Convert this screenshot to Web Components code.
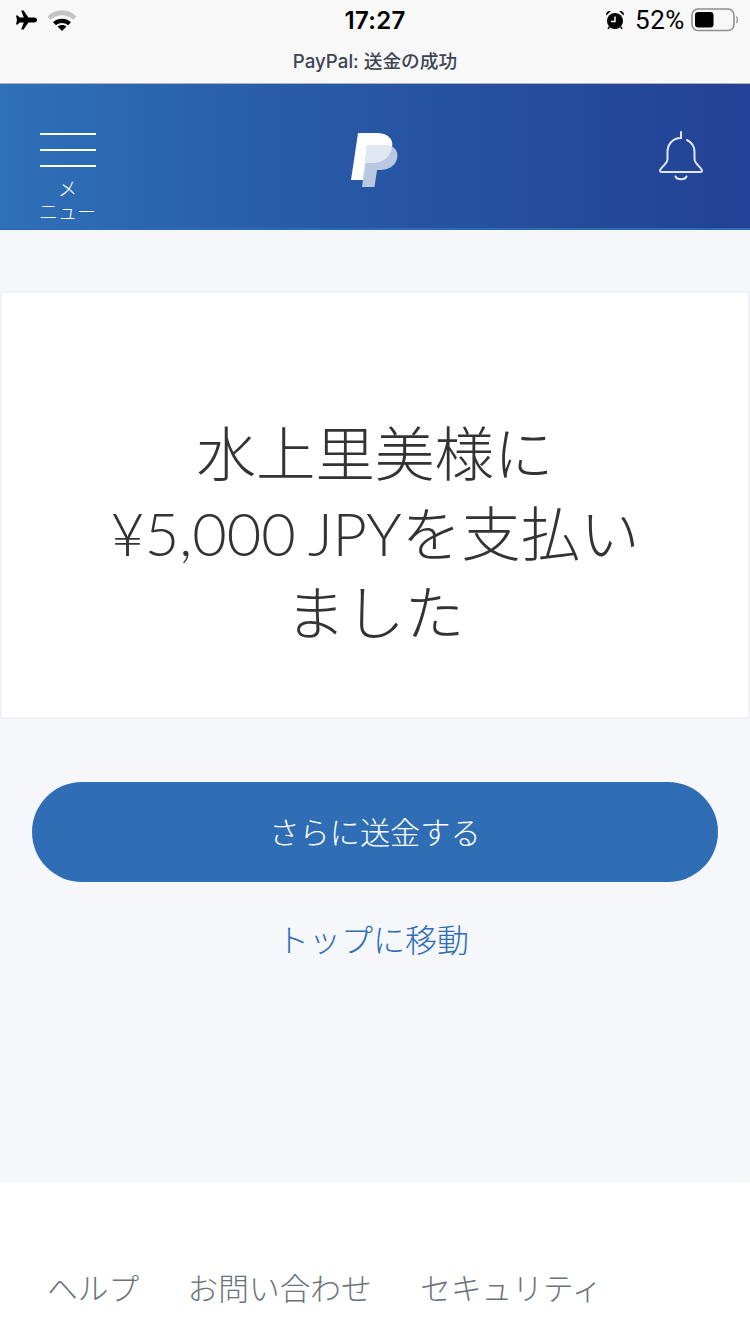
<!DOCTYPE html>
<html lang="ja">
<head>
<meta charset="utf-8">
<title>PayPal: 送金の成功</title>
<style>
    html, body {
        margin: 0;
        padding: 0;
        background: #f5f7fa;
        font-family: "Noto Sans CJK JP", sans-serif;
    }
</style>
</head>
<body>
<status-bar time="17:27" battery="52%" title="PayPal: 送金の成功"></status-bar>
<pp-header></pp-header>
<pp-main>
    <result-card>水上里美様に<br>¥5,000 JPYを支払い<br>ました</result-card>
    <pill-button>さらに送金する</pill-button>
    <text-link>トップに移動</text-link>
</pp-main>
<pp-footer>
    <a>ヘルプ</a>
    <a>お問い合わせ</a>
    <a>セキュリティ</a>
</pp-footer>

<script>
class StatusBar extends HTMLElement {
    constructor() {
        super();
        this.attachShadow({ mode: 'open' });
    }

    connectedCallback() {
        this.shadowRoot.innerHTML = `
            <style>
                :host {
                    display: block;
                    height: 83px;
                    background: #f8f8f8;
                    border-bottom: 1px solid #b2b2b2;
                    font-family: Inter, "Noto Sans CJK JP", sans-serif;
                    color: #000;
                }
                .top {
                    display: grid;
                    grid-template-columns: 1fr auto 1fr;
                    align-items: center;
                    height: 40px;
                    padding: 0 16px;
                }
                .left, .right {
                    display: flex;
                    align-items: center;
                }
                .left { gap: 10px; }
                .right { justify-content: flex-end; margin-right: -4px; }
                .time {
                    font-size: 24px;
                    font-weight: 600;
                    letter-spacing: 0.3px;
                }
                .pct {
                    font-size: 26px;
                    font-weight: 400;
                    margin: 0 6px 0 11px;
                    font-family: Roboto, sans-serif;
                    letter-spacing: 0.6px;
                }
                svg { display: block; }
                .title {
                    text-align: center;
                    font-size: 18.7px;
                    line-height: 24px;
                    margin-top: 10px;
                    font-weight: 500;
                    color: #3d4454;
                }
            </style>
            <div class="top">
                <div class="left">
                    <svg width="21" height="20" viewBox="0 0 21 20">
                        <path fill="#000" d="M5.2 0.5H7.6L12.4 7.6H18C20 7.6 21 8.8 21 10S20 12.4 18 12.4H12.4L7.6 19.5H5.2L7.8 12.4H3.6L1.8 14.6H0L1 10L0 5.4H1.8L3.6 7.6H7.8Z"/>
                    </svg>
                    <svg width="30" height="22" viewBox="0 0 30 22">
                        <path fill="#c4c4c4" d="M0.5 7.5C8.5 -0.8 21.5 -0.8 29.5 7.5L26.4 10.8C20 4.6 10 4.6 3.6 10.8Z"/>
                        <path fill="#000" d="M6 13.2C11 8.6 19 8.6 24 13.2L21 16.2C17.5 13.3 12.5 13.3 9 16.2Z"/>
                        <path fill="#000" d="M10.6 17.6C13 15.6 17 15.6 19.4 17.6L15 22Z"/>
                    </svg>
                </div>
                <div class="time">${this.getAttribute('time')}</div>
                <div class="right">
                    <svg width="18" height="20" viewBox="0 0 18 20">
                        <circle cx="9" cy="11" r="8" fill="#000"/>
                        <path d="M9 6.5V11.5H5" fill="none" stroke="#f8f8f8" stroke-width="1.5"/>
                        <path fill="#000" d="M0.3 5.5C-0.6 2.6 2 0.2 4.8 1.2ZM17.7 5.5C18.6 2.6 16 0.2 13.2 1.2Z"/>
                        <path d="M3.4 16.6L2 19M14.6 16.6L16 19" stroke="#000" stroke-width="1.4"/>
                    </svg>
                    <span class="pct">${this.getAttribute('battery')}</span>
                    <svg width="47" height="24" viewBox="0 0 47 24">
                        <rect x="1" y="1" width="42" height="21.5" rx="6" fill="none" stroke="#8e8e8e" stroke-width="1.6"/>
                        <rect x="4" y="4" width="18.5" height="15.5" rx="3.2" fill="#000"/>
                        <path d="M45.4 8.5C46.6 9.5 46.6 14 45.4 15" fill="none" stroke="#9a9a9a" stroke-width="1.4"/>
                    </svg>
                </div>
            </div>
            <div class="title">${this.getAttribute('title')}</div>
        `;
    }
}

class PpHeader extends HTMLElement {
    constructor() {
        super();
        this.attachShadow({ mode: 'open' });
    }

    connectedCallback() {
        this.shadowRoot.innerHTML = `
            <style>
                :host {
                    display: block;
                    box-sizing: border-box;
                    height: 146px;
                    background: linear-gradient(90deg, #2e71b9 0%, #2a5fab 30%, #25509f 65%, #234196 100%);
                    border-bottom: 2px solid #2c6bb4;
                    color: #fff;
                }
                .bar {
                    display: grid;
                    grid-template-columns: 1fr auto 1fr;
                    padding: 44px 46px 0 40px;
                }
                .menu {
                    width: 56px;
                    display: flex;
                    flex-direction: column;
                    margin-top: 4.5px;
                }
                .menu i {
                    display: block;
                    height: 2px;
                    background: #fff;
                    margin-bottom: 14.25px;
                }
                .menu span {
                    display: block;
                    text-align: center;
                    white-space: nowrap;
                    font-size: 19px;
                    line-height: 23px;
                    font-weight: 300;
                    margin: -5px 0 0 -1px;
                }
                .logo { display: block; margin-left: 2px; }
                .bell { justify-self: end; margin: -1px -3px 0 0; display: block; }
            </style>
            <div class="bar">
                <div class="menu">
                    <i></i><i></i><i></i>
                    <span>メ<br>ニュー</span>
                </div>
                <svg class="logo" width="56" height="64" viewBox="0 0 56 64">
                    <defs>
                        <clipPath id="front"><path d="M13 5H31C43 5 49 11 47 20C45 30 37 35 27 35H21L18 52H6Z"/></clipPath>
                    </defs>
                    <path fill="#fff" d="M13 5H31C43 5 49 11 47 20C45 30 37 35 27 35H21L18 52H6Z"/>
                    <path fill="#b8c8e1" d="M22 17H40C49 17 54 23 52 31C50 38 43 42 36 42H32L29.5 59H17Z"/>
                    <path fill="#e2e8f3" clip-path="url(#front)" d="M22 17H40C49 17 54 23 52 31C50 38 43 42 36 42H32L29.5 59H17Z"/>
                </svg>
                <svg class="bell" width="52" height="58" viewBox="0 0 52 58" fill="none" stroke="#dfe8f6" stroke-width="2" stroke-linecap="round">
                    <path d="M26 5V11C18 11 12.5 17 12.5 25V32C12.5 37 5 41 5 43.5C5 44.6 6 45 7 45H45C46 45 47 44.6 47 43.5C47 41 39.5 37 39.5 32V25C39.5 19.5 37 15.5 32 13"/>
                    <path d="M20.5 49.5C22 53 30 53 31.5 49.5"/>
                </svg>
            </div>
        `;
    }
}

class PpMain extends HTMLElement {
    constructor() {
        super();
        this.attachShadow({ mode: 'open' });
        this.shadowRoot.innerHTML = `
            <style>
                :host {
                    display: flex;
                    flex-direction: column;
                    box-sizing: border-box;
                    height: 952px;
                    padding-top: 61px;
                    background: #f5f7fa;
                }
            </style>
            <slot></slot>
        `;
    }
}

class ResultCard extends HTMLElement {
    constructor() {
        super();
        this.attachShadow({ mode: 'open' });
        this.shadowRoot.innerHTML = `
            <style>
                :host {
                    display: flex;
                    align-items: center;
                    justify-content: center;
                    box-sizing: border-box;
                    height: 428px;
                    padding-top: 57px;
                    background: #fff;
                    border: 2px solid #eff1f4;
                    text-align: center;
                    font-family: Lato, "Noto Sans CJK JP", sans-serif;
                    font-size: 59.5px;
                    font-weight: 300;
                    line-height: 79.5px;
                    word-spacing: -4px;
                    color: #333;
                }
            </style>
            <div><slot></slot></div>
        `;
    }
}

class PillButton extends HTMLElement {
    constructor() {
        super();
        this.attachShadow({ mode: 'open' });
        this.shadowRoot.innerHTML = `
            <style>
                :host {
                    display: flex;
                    align-items: center;
                    justify-content: center;
                    box-sizing: border-box;
                    height: 100px;
                    margin: 63px 32px 0;
                    padding-bottom: 2px;
                    border-radius: 50px;
                    background: #2f6eb5;
                    color: #fff;
                    font-size: 30.2px;
                    font-weight: 300;
                }
            </style>
            <slot></slot>
        `;
    }
}

class TextLink extends HTMLElement {
    constructor() {
        super();
        this.attachShadow({ mode: 'open' });
        this.shadowRoot.innerHTML = `
            <style>
                :host {
                    display: block;
                    margin-top: 34px;
                    padding-right: 4px;
                    text-align: center;
                    font-size: 32px;
                    line-height: 44px;
                    font-weight: 300;
                    color: #2f6eb5;
                }
            </style>
            <slot></slot>
        `;
    }
}

class PpFooter extends HTMLElement {
    constructor() {
        super();
        this.attachShadow({ mode: 'open' });
        this.shadowRoot.innerHTML = `
            <style>
                :host {
                    display: flex;
                    box-sizing: border-box;
                    height: 152px;
                    padding: 83px 0 0 47px;
                    gap: 48.5px;
                    background: #fff;
                    font-size: 30.7px;
                    line-height: 44px;
                    font-weight: 300;
                    color: #6c7378;
                }
            </style>
            <slot></slot>
        `;
    }
}

customElements.define('status-bar', StatusBar);
customElements.define('pp-header', PpHeader);
customElements.define('pp-main', PpMain);
customElements.define('result-card', ResultCard);
customElements.define('pill-button', PillButton);
customElements.define('text-link', TextLink);
customElements.define('pp-footer', PpFooter);
</script>
</body>
</html>
